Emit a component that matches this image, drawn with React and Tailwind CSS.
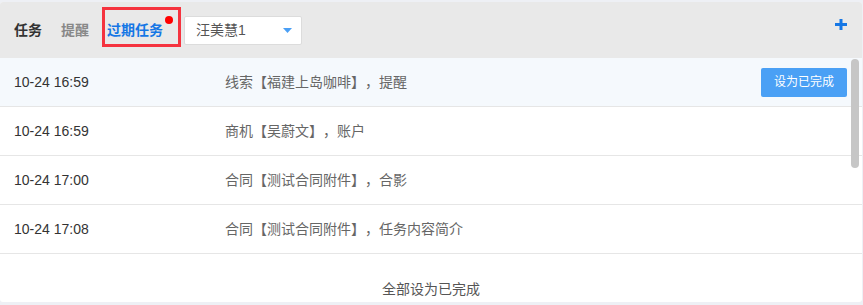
import React from "react";

// --- DATA: overdue task rows ---
const tasks = [
  { time: "10-24 16:59", text: "线索【福建上岛咖啡】，提醒", active: true },
  { time: "10-24 16:59", text: "商机【吴蔚文】，账户" },
  { time: "10-24 17:00", text: "合同【测试合同附件】，合影" },
  { time: "10-24 17:08", text: "合同【测试合同附件】，任务内容简介" },
];

const font = {
  fontFamily: '"Liberation Sans", "Noto Sans CJK SC", sans-serif',
};

const TaskPanel = () => {
  return (
    <div className="w-[863px] h-[305px] bg-[#eef0f5] pt-[2px]" style={font}>
      <div className="w-[862px] h-[300px] bg-white rounded-[3px] overflow-hidden flex flex-col">
        {/* 1. HEADER: tabs, owner select, add */}
        <div className="h-[56px] bg-[#e9e9e9] flex items-center pl-[14px] pr-[15px] text-[14px]">
          <span className="font-bold text-[#333] leading-[20px]">任务</span>
          <span className="ml-[19px] font-bold text-[#888] leading-[20px]">
            提醒
          </span>
          <div className="relative ml-[13px] -mt-[6px] w-[79px] h-[40px] border-[3px] border-[#f5333f] pl-[2px] pt-[10px]">
            <span className="font-bold text-[#1677e5] leading-[20px]">
              过期任务
            </span>
            <span className="absolute top-[6px] right-[5px] w-[8px] h-[8px] rounded-full bg-[#ff0000]"></span>
          </div>
          <div className="ml-[3px] w-[118px] h-[29px] bg-white border border-[#dcdcdc] rounded-[2px] flex items-center justify-between pl-[11px] pr-[9px]">
            <span className="text-[#555] leading-[20px]">汪美慧1</span>
            <svg width="9" height="5" viewBox="0 0 9 5">
              <path d="M0 0 L9 0 L4.5 5 Z" fill="#4a9ff5" />
            </svg>
          </div>
          <svg
            className="ml-auto self-start mt-[17px]"
            width="12"
            height="11"
            viewBox="0 0 12 11"
          >
            <path d="M0 5.5 H12 M6 0 V11" stroke="#1677e5" strokeWidth="3" />
          </svg>
        </div>

        {/* 2. TASK LIST */}
        <div className="relative">
          {tasks.map((task, index) => (
            <div
              key={index}
              className={`h-[49px] border-b border-[#e6e6e6] flex items-center pl-[14px] pr-[15px] text-[14px] ${
                task.active ? "bg-[#f5f9fd]" : "bg-white"
              }`}
            >
              <span className="w-[211px] text-[#333]">{task.time}</span>
              <span className="flex-1 text-[#666] [text-spacing-trim:space-all]">
                {task.text}
              </span>
              {task.active && (
                <button className="w-[86px] h-[29px] bg-[#4aa0f5] text-white text-[12px] rounded-[2px]">
                  设为已完成
                </button>
              )}
            </div>
          ))}
          {/* scrollbar thumb */}
          <div className="absolute top-[1px] right-[3px] w-[8px] h-[109px] rounded-full bg-[#c6c6c6]"></div>
        </div>

        {/* 3. FOOTER */}
        <div className="h-[48px] pt-[25px] text-center text-[14px] leading-[20px] text-[#555]">
          全部设为已完成
        </div>
      </div>
    </div>
  );
};

export default TaskPanel;
